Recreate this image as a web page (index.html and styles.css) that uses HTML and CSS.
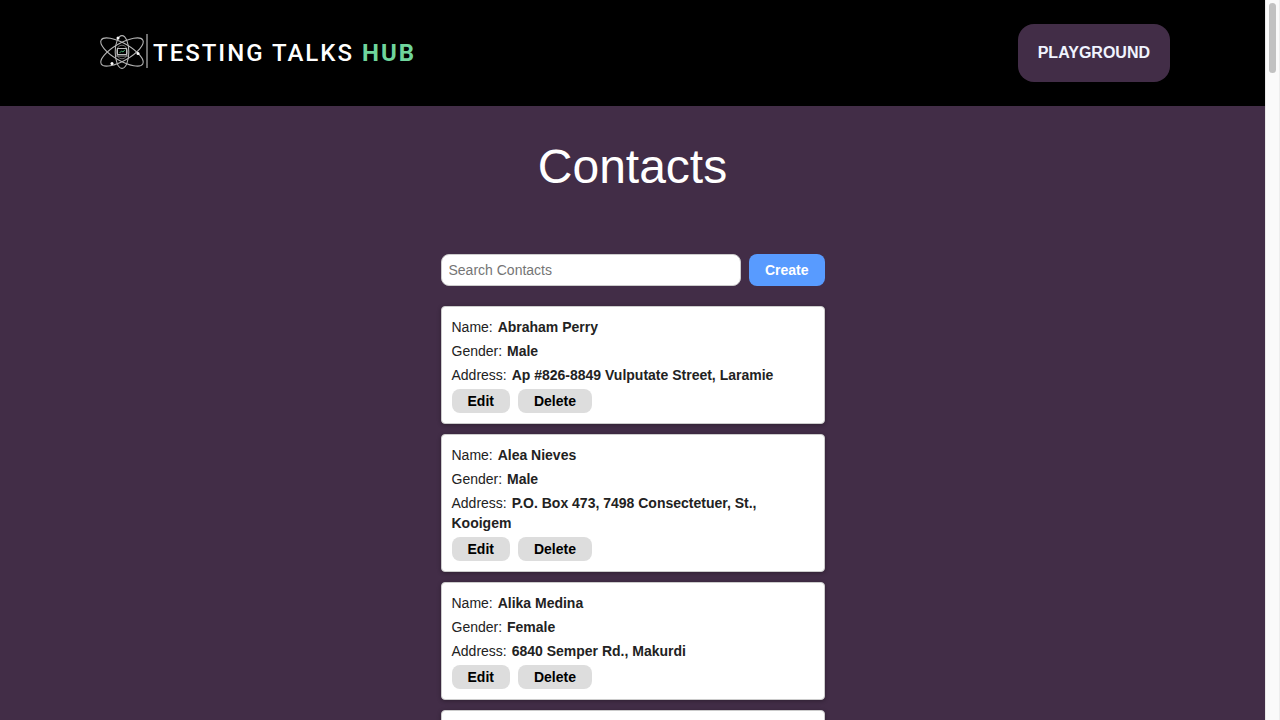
FILE: index.html
```html
<!DOCTYPE html>
<html lang="en">
<head>
<meta charset="utf-8">
<meta name="viewport" content="width=device-width, initial-scale=1">
<title>Contacts</title>
<link rel="stylesheet" href="styles.css">
</head>
<body>
<div class="page">
  <header class="header">
    <a class="logo" href="#">
      <svg class="logo-mark" viewBox="0 1 50 38" fill="none" aria-hidden="true">
        <g stroke="#b4b4b4" stroke-width="1.1">
          <ellipse cx="22" cy="19" rx="6.8" ry="16.4"/>
          <ellipse cx="22" cy="19" rx="24" ry="8.6" transform="rotate(30 22 19)"/>
          <ellipse cx="22" cy="19" rx="24" ry="8.6" transform="rotate(-30 22 19)"/>
        </g>
        <ellipse cx="22" cy="19" rx="5.6" ry="6.8" stroke="#6a6a6a"/>
        <rect x="17.5" y="15.5" width="9" height="6" stroke="#bdbdbd" fill="#000"/>
        <path d="M16 23h12" stroke="#9a9a9a"/>
        <path d="M19.5 20l2-2 1.5 1 2-2.3" stroke="#3fa76d"/>
        <g fill="#fff">
          <circle cx="18" cy="5" r="1.5"/>
          <circle cx="38" cy="20.5" r="1.5"/>
          <circle cx="12" cy="30.5" r="1.5"/>
        </g>
        <path d="M47 1v34" stroke="#8a8a8a" stroke-width="1.6"/>
      </svg>
      <span class="logo-text">TESTING TALKS <span class="logo-accent">HUB</span></span>
    </a>
    <a class="nav-link" href="#">PLAYGROUND</a>
  </header>

  <main class="main">
    <h1 class="title">Contacts</h1>
    <div class="contacts">
      <form class="toolbar">
        <input class="search" type="search" placeholder="Search Contacts" aria-label="Search Contacts">
        <button class="button button-primary" type="button">Create</button>
      </form>
      <ul class="list">
        <li class="card">
          <p class="field">Name: <b class="value">Abraham Perry</b></p>
          <p class="field">Gender: <b class="value">Male</b></p>
          <p class="field">Address: <b class="value">Ap #826-8849 Vulputate Street, Laramie</b></p>
          <div class="actions"><button class="button" type="button">Edit</button><button class="button" type="button">Delete</button></div>
        </li>
        <li class="card">
          <p class="field">Name: <b class="value">Alea Nieves</b></p>
          <p class="field">Gender: <b class="value">Male</b></p>
          <p class="field">Address: <b class="value">P.O. Box 473, 7498 Consectetuer, St., Kooigem</b></p>
          <div class="actions"><button class="button" type="button">Edit</button><button class="button" type="button">Delete</button></div>
        </li>
        <li class="card">
          <p class="field">Name: <b class="value">Alika Medina</b></p>
          <p class="field">Gender: <b class="value">Female</b></p>
          <p class="field">Address: <b class="value">6840 Semper Rd., Makurdi</b></p>
          <div class="actions"><button class="button" type="button">Edit</button><button class="button" type="button">Delete</button></div>
        </li>
        <li class="card card-next"></li>
      </ul>
    </div>
  </main>
</div>
<div class="scrollbar" aria-hidden="true"><div class="thumb"></div></div>
</body>
</html>
```

FILE: styles.css
```css
* {
  box-sizing: border-box;
}

body {
  margin: 0;
  height: 100vh;
  overflow: hidden;
  display: flex;
  background: #422d47;
  color: #222;
  font: 14px/20px "Liberation Sans", Arial, Helvetica, sans-serif;
}

.page {
  flex: 1;
  min-width: 0;
  overflow: hidden;
}

.header {
  display: flex;
  align-items: center;
  justify-content: space-between;
  padding: 24px 95px 24px 100px;
  background: #000;
}

.logo {
  display: flex;
  align-items: center;
  gap: 3px;
  color: #fff;
  text-decoration: none;
}

.logo-mark {
  width: 50px;
  height: 38px;
  overflow: visible;
}

.logo-text {
  font: 500 24px/36px Roboto, sans-serif;
  letter-spacing: 2px;
}

.logo-accent {
  color: #6fd59c;
  font-weight: 700;
}

.nav-link {
  padding: 20px;
  border-radius: 16px;
  background: #422d47;
  color: #f0f4ff;
  font-size: 16px;
  line-height: 18px;
  font-weight: 700;
  text-decoration: none;
}

.main {
  padding: 32px 16px;
}

.title {
  margin: 0 0 58px;
  color: #fff;
  font-size: 48px;
  line-height: 58px;
  font-weight: 400;
  text-align: center;
}

.contacts {
  max-width: 384px;
  margin: 0 auto;
}

.toolbar {
  display: flex;
  gap: 8px;
  margin-bottom: 20px;
}

.search {
  flex: 1;
  min-width: 0;
  height: 32px;
  padding: 0 7px;
  border: 1px solid #ccc;
  border-radius: 8px;
  background: #fff;
  font: inherit;
  appearance: none;
}

.search::placeholder {
  color: #757575;
}

.button {
  padding: 2px 16px;
  border: 0;
  border-radius: 8px;
  background: #ddd;
  color: #000;
  font: inherit;
  font-weight: 700;
}

.button-primary {
  background: #589bff;
  color: #fff;
}

.list {
  display: flex;
  flex-direction: column;
  gap: 10px;
  margin: 0;
  padding: 0;
  list-style: none;
}

.card {
  padding: 10px;
  border: 1px solid #ccc;
  border-radius: 4px;
  background: #fff;
  box-shadow: 0 1px 4px rgba(0, 0, 0, 0.3);
}

.card-next {
  min-height: 118px;
}

.field {
  margin: 0 0 4px;
}

.value {
  margin-left: 1px;
}

.actions {
  display: flex;
  gap: 8px;
}

.scrollbar {
  width: 15px;
  padding: 3px;
  border-left: 1px solid #e8e8e8;
  border-right: 1px solid #ededed;
  background: #fafafa;
}

.thumb {
  height: 70px;
  border-radius: 4px;
  background: #c1c1c1;
}
```
